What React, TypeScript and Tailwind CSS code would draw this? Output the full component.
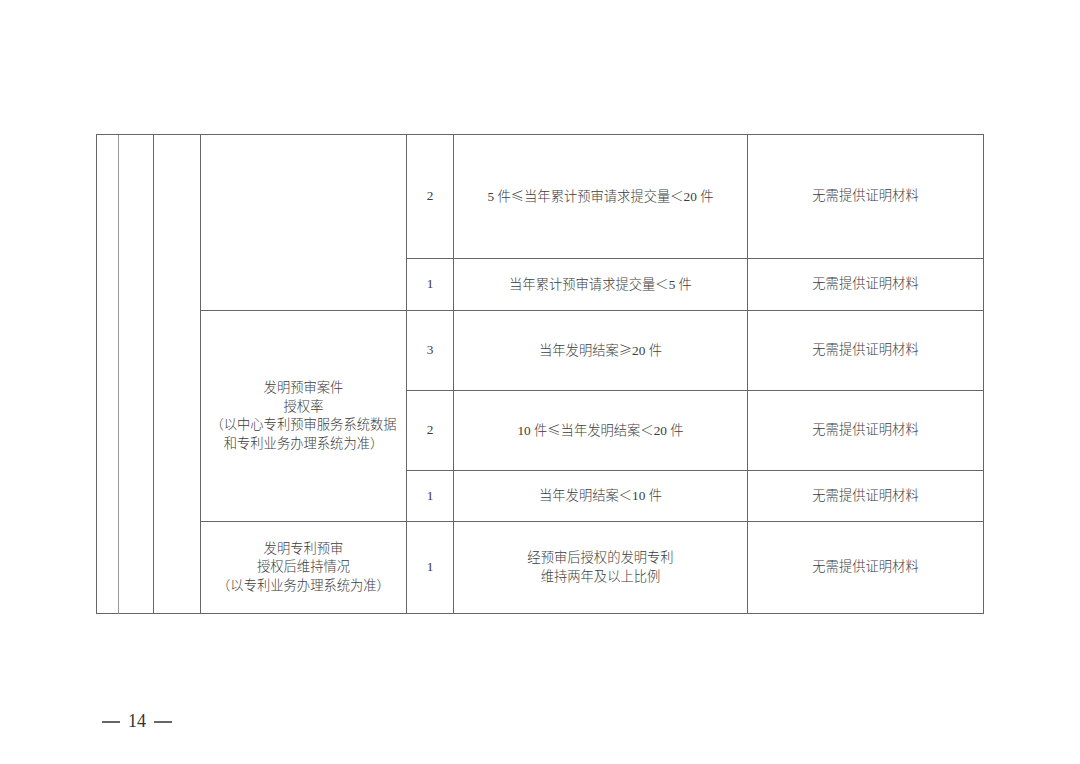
import React from 'react';

const font = { fontFamily: '"Liberation Serif", "Noto Sans CJK SC", serif' };

const cell = 'border-r border-b border-[#666] flex items-center justify-center text-center';

// 全角比较符号
const Sym = ({ c }: { c: string }) => (
  <span className="font-['Noto_Sans_CJK_SC',sans-serif] font-light">{c}</span>
);

const rightRows: { score: string; rule: React.ReactNode }[] = [
  { score: '2', rule: <>5 件<Sym c="≤" />当年累计预审请求提交量<Sym c="＜" />20 件</> },
  { score: '1', rule: <>当年累计预审请求提交量<Sym c="＜" />5 件</> },
  { score: '3', rule: <>当年发明结案<Sym c="≥" />20 件</> },
  { score: '2', rule: <>10 件<Sym c="≤" />当年发明结案<Sym c="＜" />20 件</> },
  { score: '1', rule: <>当年发明结案<Sym c="＜" />10 件</> },
  { score: '1', rule: <>经预审后授权的发明专利<br />维持两年及以上比例</> },
];

const rowStarts = [
  'row-start-1',
  'row-start-2',
  'row-start-3',
  'row-start-4',
  'row-start-5',
  'row-start-6',
];

const App = () => {
  return (
    <div className="w-[1080px] h-[764px] bg-white relative" style={font}>
      <div className="pt-[134px] flex justify-center">
        <div className="grid grid-cols-[22px_35px_47px_206px_47px_294px_236px] grid-rows-[124px_52px_80px_80px_51px_92px] border-l border-t border-[#666] text-[13.3px] leading-[18.5px] text-[#3c3c3c] font-light">
          {/* 左侧三列（跨全部行） */}
          <div className={`${cell} col-start-1 row-start-1 row-span-6 border-r-[#999]`} />
          <div className={`${cell} col-start-2 row-start-1 row-span-6`} />
          <div className={`${cell} col-start-3 row-start-1 row-span-6`} />

          {/* 指标列 */}
          <div className={`${cell} col-start-4 row-start-1 row-span-2`} />
          <div className={`${cell} col-start-4 row-start-3 row-span-3`}>
            <div className="whitespace-pre-line">
              {'发明预审案件\n授权率\n（以中心专利预审服务系统数据\n和专利业务办理系统为准）'}
            </div>
          </div>
          <div className={`${cell} col-start-4 row-start-6`}>
            <div className="whitespace-pre-line">
              {'发明专利预审\n授权后维持情况\n（以专利业务办理系统为准）'}
            </div>
          </div>

          {/* 分值 / 标准 / 材料 */}
          {rightRows.map((r, i) => (
            <React.Fragment key={i}>
              <div className={`${cell} col-start-5 ${rowStarts[i]}`}>{r.score}</div>
              <div className={`${cell} col-start-6 ${rowStarts[i]}`}>
                <div>{r.rule}</div>
              </div>
              <div className={`${cell} col-start-7 ${rowStarts[i]}`}>无需提供证明材料</div>
            </React.Fragment>
          ))}
        </div>
      </div>

      {/* 页码 */}
      <div className="mt-[94px] ml-[102px] flex items-center gap-[8px] text-[18px] text-[#333]">
        <span className="block w-[18px] h-[2px] bg-[#666]" />
        <span>14</span>
        <span className="block w-[18px] h-[2px] bg-[#666]" />
      </div>
    </div>
  );
};

export default App;
